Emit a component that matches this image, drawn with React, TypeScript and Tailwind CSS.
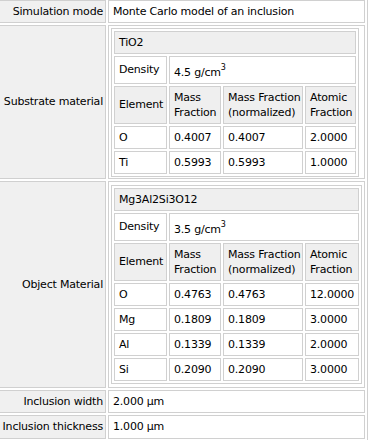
type Element = {
  symbol: string;
  mass: string;
  normalized: string;
  atomic: string;
};

type Material = {
  formula: string;
  density: string;
  elements: Element[];
};

const substrate: Material = {
  formula: 'TiO2',
  density: '4.5',
  elements: [
    { symbol: 'O', mass: '0.4007', normalized: '0.4007', atomic: '2.0000' },
    { symbol: 'Ti', mass: '0.5993', normalized: '0.5993', atomic: '1.0000' },
  ],
};

const inclusion: Material = {
  formula: 'Mg3Al2Si3O12',
  density: '3.5',
  elements: [
    { symbol: 'O', mass: '0.4763', normalized: '0.4763', atomic: '12.0000' },
    { symbol: 'Mg', mass: '0.1809', normalized: '0.1809', atomic: '3.0000' },
    { symbol: 'Al', mass: '0.1339', normalized: '0.1339', atomic: '2.0000' },
    { symbol: 'Si', mass: '0.2090', normalized: '0.2090', atomic: '3.0000' },
  ],
};

function Cell({
  children,
  className = '',
}: {
  children?: React.ReactNode;
  className?: string;
}) {
  return (
    <div className={`flex items-center border border-[#d0d0d0] px-[4px] whitespace-nowrap ${className}`}>
      {children}
    </div>
  );
}

function Label({ children, className = '' }: { children: React.ReactNode; className?: string }) {
  return (
    <div className={`flex items-center justify-end border border-[#d0d0d0] bg-[#f0f0f0] pr-[2px] whitespace-nowrap ${className}`}>
      {children}
    </div>
  );
}

function CompositionTable({ material, wide }: { material: Material; wide?: boolean }) {
  return (
    <div
      className={`grid ${
        wide ? 'grid-cols-[53px_52px_80px_54px]' : 'grid-cols-[53px_52px_80px_51px]'
      } gap-[2px] border border-[#d0d0d0] p-[2px]`}
    >
      <Cell className="col-span-4 h-[23px] bg-[#efefef]">{material.formula}</Cell>

      <Cell className="h-[28px] bg-white">Density</Cell>
      <Cell className="col-span-3 h-[28px] bg-white">
        <span className="pt-[6px]">
          {material.density} g/cm
          <span className="relative -top-[6px] text-[8px]">3</span>
        </span>
      </Cell>

      {/* two-line column headers */}
      <Cell className="h-[38px] bg-[#efefef]">Element</Cell>
      <Cell className="h-[38px] bg-[#efefef] leading-[15px]">
        <span>
          Mass
          <br />
          Fraction
        </span>
      </Cell>
      <Cell className="h-[38px] bg-[#efefef] leading-[15px]">
        <span>
          Mass Fraction
          <br />
          (normalized)
        </span>
      </Cell>
      <Cell className="h-[38px] bg-[#efefef] leading-[15px]">
        <span>
          Atomic
          <br />
          Fraction
        </span>
      </Cell>

      {material.elements.map((el) => (
        <div key={el.symbol} className="contents">
          <Cell className="h-[23px] bg-white">{el.symbol}</Cell>
          <Cell className="h-[23px] bg-white">{el.mass}</Cell>
          <Cell className="h-[23px] bg-white">{el.normalized}</Cell>
          <Cell className="h-[23px] bg-white">{el.atomic}</Cell>
        </div>
      ))}
    </div>
  );
}

export default function App() {
  return (
    <div className="h-[440px] w-[375px] overflow-hidden bg-white font-['DejaVu_Sans',sans-serif] text-[11px] leading-[14px] tracking-[-0.2px] text-black">
      <div className="-ml-[4px] -mt-[3px] grid w-[372px] grid-cols-[107px_257px] gap-[2px] border border-[#d0d0d0] p-[2px]">
        <Label className="h-[23px]">Simulation mode</Label>
        <Cell className="h-[23px] bg-white">Monte Carlo model of an inclusion</Cell>

        <Label>Substrate material</Label>
        <div className="flex items-start border border-[#d0d0d0] bg-white pb-[1px] pl-[2px] pt-[2px]">
          <CompositionTable material={substrate} />
        </div>

        <Label>Object Material</Label>
        <div className="flex items-start border border-[#d0d0d0] bg-white pb-[3px] pl-[2px] pt-[3px]">
          <CompositionTable material={inclusion} wide />
        </div>

        <Label className="h-[23px]">Inclusion width</Label>
        <Cell className="h-[23px] bg-white">2.000 µm</Cell>

        <Label className="h-[24px]">Inclusion thickness</Label>
        <Cell className="h-[24px] bg-white">1.000 µm</Cell>
      </div>
    </div>
  );
}
